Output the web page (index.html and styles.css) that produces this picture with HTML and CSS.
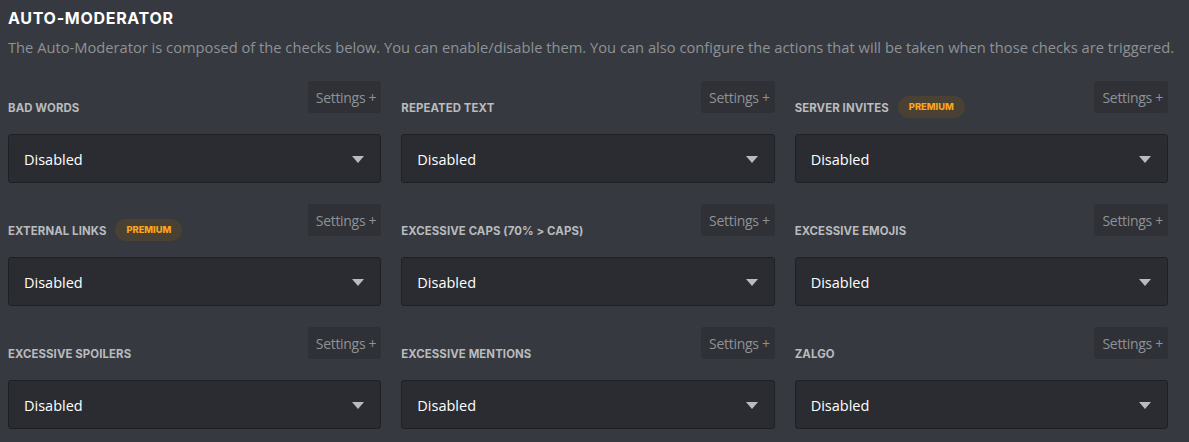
FILE: index.html
```html
<!DOCTYPE html>
<html>
<head>
<meta charset="utf-8">
<link rel="stylesheet" href="styles.css">
</head>
<body>
<div class="page">
  <h1 class="title">AUTO-MODERATOR</h1>
  <p class="desc">The Auto-Moderator is composed of the checks below. You can enable/disable them. You can also configure the actions that will be taken when those checks are triggered.</p>
  <div class="grid">
    <div class="cell">
      <div class="head"><span class="label">BAD WORDS</span><button class="settings">Settings +</button></div>
      <div class="select"><span>Disabled</span><i class="caret"></i></div>
    </div>
    <div class="cell">
      <div class="head"><span class="label">REPEATED TEXT</span><button class="settings">Settings +</button></div>
      <div class="select"><span>Disabled</span><i class="caret"></i></div>
    </div>
    <div class="cell">
      <div class="head"><span class="label">SERVER INVITES</span><span class="badge">PREMIUM</span><button class="settings">Settings +</button></div>
      <div class="select"><span>Disabled</span><i class="caret"></i></div>
    </div>
    <div class="cell">
      <div class="head"><span class="label">EXTERNAL LINKS</span><span class="badge">PREMIUM</span><button class="settings">Settings +</button></div>
      <div class="select"><span>Disabled</span><i class="caret"></i></div>
    </div>
    <div class="cell">
      <div class="head"><span class="label">EXCESSIVE CAPS (70% &gt; CAPS)</span><button class="settings">Settings +</button></div>
      <div class="select"><span>Disabled</span><i class="caret"></i></div>
    </div>
    <div class="cell">
      <div class="head"><span class="label">EXCESSIVE EMOJIS</span><button class="settings">Settings +</button></div>
      <div class="select"><span>Disabled</span><i class="caret"></i></div>
    </div>
    <div class="cell">
      <div class="head"><span class="label">EXCESSIVE SPOILERS</span><button class="settings">Settings +</button></div>
      <div class="select"><span>Disabled</span><i class="caret"></i></div>
    </div>
    <div class="cell">
      <div class="head"><span class="label">EXCESSIVE MENTIONS</span><button class="settings">Settings +</button></div>
      <div class="select"><span>Disabled</span><i class="caret"></i></div>
    </div>
    <div class="cell">
      <div class="head"><span class="label">ZALGO</span><button class="settings">Settings +</button></div>
      <div class="select"><span>Disabled</span><i class="caret"></i></div>
    </div>
  </div>
</div>
</body>
</html>
```

FILE: styles.css
```css
html, body {
  margin: 0;
  padding: 0;
  background: #36393f;
}
body {
  font-family: "Open Sans", "Noto Sans", sans-serif;
  color: #dcddde;
}
.page {
  padding: 7px 21px 0 8px;
}
.title {
  margin: 0;
  font-family: "Inter", "Open Sans", sans-serif;
  font-weight: 700;
  font-size: 16px;
  line-height: 22px;
  letter-spacing: 0.7px;
  color: #ffffff;
}
.desc {
  margin: 8px 0 0;
  font-size: 14.7px;
  line-height: 20px;
  color: #8e9297;
  white-space: nowrap;
}
.grid {
  margin-top: 24px;
  display: grid;
  grid-template-columns: repeat(3, 1fr);
  column-gap: 20px;
  row-gap: 21px;
}
.head {
  display: flex;
  align-items: flex-start;
  height: 53px;
}
.label {
  margin-top: 20px;
  font-family: "Inter", "Open Sans", sans-serif;
  font-weight: 700;
  font-size: 11.4px;
  line-height: 14px;
  color: #b9bbbe;
  letter-spacing: 0.1px;
}
.badge {
  margin: 15px 0 0 9px;
  height: 22px;
  padding: 0 11px;
  border-radius: 11px;
  background: #4a4135;
  color: #faa61a;
  font-family: "Inter", "Open Sans", sans-serif;
  font-weight: 800;
  font-size: 9.3px;
  line-height: 22px;
}
.settings {
  margin-left: auto;
  height: 32px;
  padding: 0 5px 0 8px;
  border: 0;
  border-radius: 3px;
  background: #2f3136;
  color: #8e9297;
  font-family: "Open Sans", sans-serif;
  font-size: 14px;
  font-weight: 400;
  letter-spacing: -0.3px;
}
.select {
  box-sizing: border-box;
  height: 49px;
  border: 1px solid #1f2023;
  border-radius: 3px;
  background: #2a2c31;
  display: flex;
  align-items: center;
  justify-content: space-between;
  padding: 2px 16px 0 15px;
  font-size: 14.5px;
  color: #ffffff;
}
.caret {
  width: 0;
  height: 0;
  border-left: 6px solid transparent;
  border-right: 6px solid transparent;
  border-top: 7px solid #b9bbbe;
}
```
